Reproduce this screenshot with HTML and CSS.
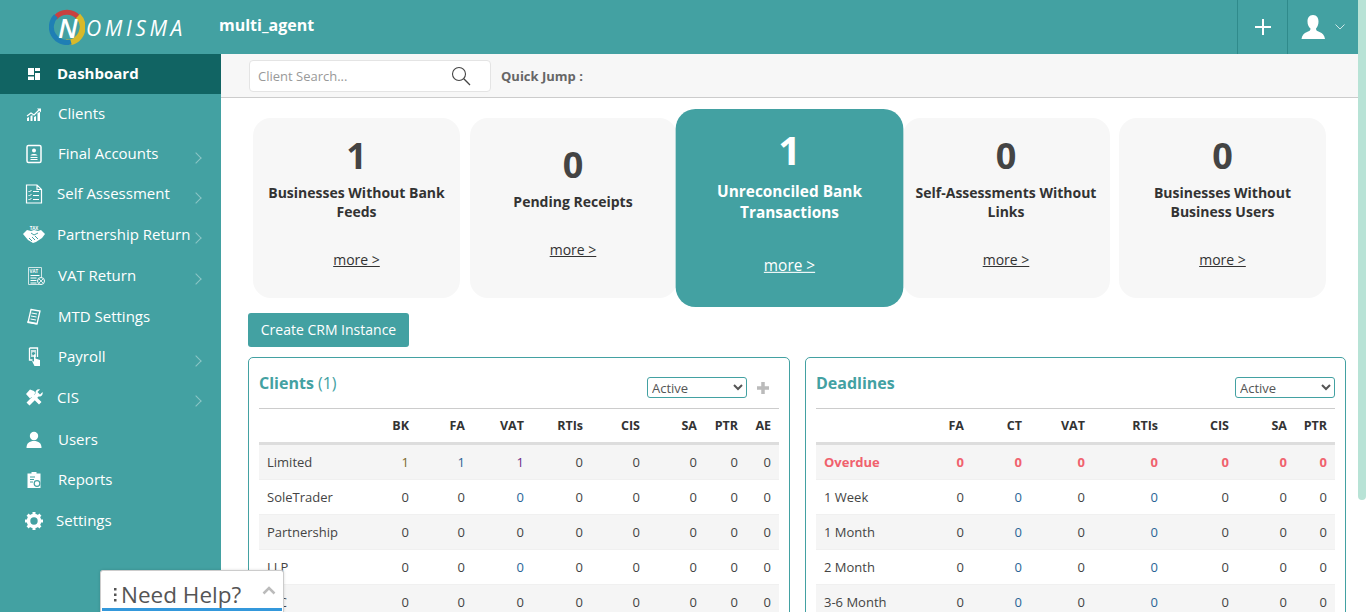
FILE: index.html
```html
<!DOCTYPE html>
<html lang="en">
<head>
  <meta charset="UTF-8" />
  <title>Nomisma - Dashboard</title>
  <link rel="stylesheet" href="styles.css">
</head>
<body>
<div class="page">
  <header class="topbar">
    <div class="logo">
      <svg class="logo-ring" width="36" height="36" viewBox="0 0 36 36">
        <path d="M6 9A15.500 15.500 0 0 1 30 9" fill="none" stroke="#c8413f" stroke-width="5"/>
        <path d="M29 7A15.500 15.500 0 0 1 17 33.500" fill="none" stroke="#d9b92a" stroke-width="6"/>
        <path d="M22 33A15.500 15.500 0 0 1 7 7" fill="none" stroke="#1f7fb4" stroke-width="5"/>
      </svg>
      <span class="logo-n">N</span>
      <span class="logo-text">OMISMA</span>
    </div>
    <div class="firm">multi_agent</div>
    <div class="top-actions">
      <div class="top-btn plus-btn">
        <svg width="18" height="18" viewBox="0 0 18 18"><path d="M9 1v16M1 9h16" stroke="#fff" stroke-width="2"/></svg>
      </div>
      <div class="top-btn user-btn">
        <svg width="24" height="24" viewBox="0 0 24 24"><path d="M12 0c4 0 5.500 3 5.500 6.500 0 3-1 5.500-2.500 7 0 2 1 2.500 3.500 3.500 3 1.200 5 3 5.500 7H.5c.5-4 2.500-5.800 5.500-7 2.500-1 3.500-1.500 3.500-3.500C7.500 12 6.500 9.500 6.500 6.500 6.500 3 8 0 12 0z" fill="#fff"/></svg>
        <svg width="10" height="6" viewBox="0 0 10 6"><path d="M.5.5 5 5 9.500.5" fill="none" stroke="#cfe6e6" stroke-width="1"/></svg>
      </div>
    </div>
  </header>

  <div class="layout">
    <nav class="sidebar">
      <a class="nav-item active">
        <svg class="nav-icon" viewBox="0 0 20 20"><path d="M4 4h6v7H4zM11 4h5v3h-5zM11 9h5v7h-5zM4 12.500h6V16H4z" fill="#fff"/></svg>
        <span>Dashboard</span>
      </a>
      <a class="nav-item">
        <svg class="nav-icon" viewBox="0 0 20 20"><path d="M3 17v-3l2-1v4zM6.500 17v-5l2-1v6zM10 17v-4l2-1v5zM13.500 17V9l2.500-1v9z" fill="#fff"/><path d="M3 12l4-3 3 2 5-5" fill="none" stroke="#fff" stroke-width="1.200"/><path d="M13 4.500h4v4z" fill="#fff"/></svg>
        <span>Clients</span>
      </a>
      <a class="nav-item">
        <svg class="nav-icon" viewBox="0 0 20 20"><rect x="3" y="1.500" width="14" height="17" rx="1.500" fill="none" stroke="#fff" stroke-width="1.500"/><circle cx="10" cy="6.500" r="2" fill="#fff"/><path d="M6.500 11.500c.5-2 6.500-2 7 0zM6.500 13h7v1h-7zM6.500 15h7v1h-7z" fill="#fff"/></svg>
        <span>Final Accounts</span>
        <i class="chev"></i>
      </a>
      <a class="nav-item near">
        <svg class="nav-icon" viewBox="0 0 20 20"><path d="M2.500 1h10.500l4.500 4.500V19H2.500zM13 1v4.500h4.500" fill="none" stroke="#fff" stroke-width="1.200"/><path d="M4.500 7l1 1 2-2M4.500 11l1 1 2-2M4.500 15l1 1 2-2" fill="none" stroke="#fff" stroke-width="1"/><path d="M9 7.500h6M9 11.500h6M9 15.500h6" stroke="#fff" stroke-width="1.200"/></svg>
        <span>Self Assessment</span>
        <i class="chev"></i>
      </a>
      <a class="nav-item near tall">
        <svg class="nav-icon wide" viewBox="0 0 24 20"><path d="M1 9l4-4 4 1 3-1 4 1 3-1 4 4-3 4-6 4-3 1-5-3z" fill="#fff"/><path d="M9 8l3 2 4-2M7 13l3 3M10 12l3 3M13 11l3 3" fill="none" stroke="#43a1a2" stroke-width="1"/><text x="12" y="4.500" class="icon-tag" text-anchor="middle">TAX</text></svg>
        <span>Partnership Return</span>
        <i class="chev"></i>
      </a>
      <a class="nav-item tall">
        <svg class="nav-icon shifted" viewBox="0 0 20 20"><path d="M2.500 1.500h13v17h-13z" fill="none" stroke="#cfe6e6" stroke-width="1"/><text x="3.500" y="6.500" class="icon-tag">VAT</text><path d="M4.500 9.500h9M4.500 12h6M4.500 14.500h6M4.500 17h6" stroke="#fff" stroke-width="1"/><circle cx="15" cy="15" r="3.500" fill="#43a1a2" stroke="#fff"/><path d="M13 13l4 4M17 13l-4 4" stroke="#fff" stroke-width=".8"/></svg>
        <span>VAT Return</span>
        <i class="chev"></i>
      </a>
      <a class="nav-item tall">
        <svg class="nav-icon" viewBox="0 0 20 20"><path d="M7 2.500l9 1.500-3 13-9-1.500z" fill="none" stroke="#fff" stroke-width="1.300"/><path d="M7.500 6l5.500 1M7 9l5.500 1M6.500 12l5.500 1" stroke="#fff" stroke-width="1"/><path d="M3.500 15.500l9 2 1-1.500-10-2z" fill="#fff"/></svg>
        <span>MTD Settings</span>
      </a>
      <a class="nav-item">
        <svg class="nav-icon" viewBox="0 0 20 20"><path d="M5.500 1h8v9" fill="none" stroke="#fff" stroke-width="1.300"/><path d="M5.500 1v12h3" fill="none" stroke="#fff" stroke-width="1.300"/><rect x="7" y="3" width="5" height="7" fill="#cfe6e6"/><circle cx="9.500" cy="6.500" r="1.600" fill="#43a1a2"/><path d="M10 7.500h1.500v4l4.500 1.500v6h-5.500L8 14l2 .5z" fill="#fff"/></svg>
        <span>Payroll</span>
        <i class="chev"></i>
      </a>
      <a class="nav-item near tall">
        <svg class="nav-icon" viewBox="0 0 20 20"><path d="M2 6l4-4.500 4 1.500 1.500 2-1.500 1.500L17.500 14l-2.500 2.500L7.500 9 6 10.500z" fill="#fff"/><path d="M18.500 4l-2.500 2.500L13.500 4 16 1.500c-2.500-.8-5 1.200-4.500 4L2.500 14.500 5.500 17.500l9-9c2.800.5 4.800-1.800 4-4.500z" fill="#fff"/></svg>
        <span>CIS</span>
        <i class="chev"></i>
      </a>
      <a class="nav-item taller">
        <svg class="nav-icon" viewBox="0 0 20 20"><circle cx="10" cy="6" r="4.200" fill="#fff"/><path d="M2.500 18c0-5 3-7 7.500-7s7.500 2 7.500 7z" fill="#fff"/></svg>
        <span>Users</span>
      </a>
      <a class="nav-item">
        <svg class="nav-icon" viewBox="0 0 20 20"><path d="M3.500 3.500h4V2h5v1.500h4V18h-13z" fill="#fff"/><path d="M6 7h5M6 9.500h4M6 12h3" stroke="#43a1a2" stroke-width="1.200"/><circle cx="13" cy="13.500" r="2.800" fill="none" stroke="#43a1a2" stroke-width="1.200"/></svg>
        <span>Reports</span>
      </a>
      <a class="nav-item settings tall">
        <svg class="nav-icon" viewBox="0 0 20 20"><circle cx="10" cy="10" r="5.500" fill="none" stroke="#fff" stroke-width="3.600"/><path d="M10 1v3M10 16v3M1 10h3M16 10h3M3.600 3.600l2.100 2.100M14.300 14.300l2.100 2.100M3.600 16.400l2.100-2.100M14.300 5.700l2.100-2.100" stroke="#fff" stroke-width="3"/></svg>
        <span>Settings</span>
      </a>
    </nav>

    <main class="content">
      <div class="subbar">
        <div class="search">
          <span class="search-hint">Client Search...</span>
          <svg width="20" height="20" viewBox="0 0 20 20"><circle cx="8" cy="8" r="6.500" fill="none" stroke="#444" stroke-width="1.100"/><path d="M12.800 12.800 19 19" stroke="#444" stroke-width="1.300"/></svg>
        </div>
        <div class="quick-jump">Quick Jump :</div>
      </div>

      <div class="cards">
        <div class="card">
          <div class="card-num">1</div>
          <div class="card-title">Businesses Without Bank Feeds</div>
          <a class="card-more">more &gt;</a>
        </div>
        <div class="card">
          <div class="card-num">0</div>
          <div class="card-title">Pending Receipts</div>
          <a class="card-more">more &gt;</a>
        </div>
        <div class="card card-active">
          <div class="card-num">1</div>
          <div class="card-title">Unreconciled Bank Transactions</div>
          <a class="card-more">more &gt;</a>
        </div>
        <div class="card">
          <div class="card-num">0</div>
          <div class="card-title">Self-Assessments Without Links</div>
          <a class="card-more">more &gt;</a>
        </div>
        <div class="card">
          <div class="card-num">0</div>
          <div class="card-title">Businesses Without Business Users</div>
          <a class="card-more">more &gt;</a>
        </div>
      </div>

      <button class="crm-btn">Create CRM Instance</button>

      <div class="panels">
        <section class="panel">
          <div class="panel-head">
            <h2>Clients <span class="count">(1)</span></h2>
            <div class="panel-tools">
              <select class="status"><option>Active</option></select>
              <svg width="14" height="14" viewBox="0 0 14 14"><path d="M7 1v12M1 7h12" stroke="#bbb" stroke-width="3.500"/></svg>
            </div>
          </div>
          <table class="grid clients">
            <colgroup><col class="c100"><col class="c58"><col class="c56"><col class="c59"><col class="c59"><col class="c57"><col class="c57"><col class="c41"><col class="c33"></colgroup>
            <thead><tr><th></th><th>BK</th><th>FA</th><th>VAT</th><th>RTIs</th><th>CIS</th><th>SA</th><th>PTR</th><th>AE</th></tr></thead>
            <tbody>
              <tr><td>Limited</td><td class="olive">1</td><td class="blue">1</td><td class="purple">1</td><td>0</td><td>0</td><td>0</td><td>0</td><td>0</td></tr>
              <tr><td>SoleTrader</td><td>0</td><td>0</td><td class="blue">0</td><td>0</td><td>0</td><td>0</td><td>0</td><td>0</td></tr>
              <tr><td>Partnership</td><td>0</td><td>0</td><td>0</td><td>0</td><td>0</td><td>0</td><td>0</td><td>0</td></tr>
              <tr><td>LLP</td><td>0</td><td>0</td><td class="blue">0</td><td>0</td><td>0</td><td>0</td><td>0</td><td>0</td></tr>
              <tr><td>CIC</td><td>0</td><td>0</td><td>0</td><td>0</td><td>0</td><td>0</td><td>0</td><td>0</td></tr>
            </tbody>
          </table>
        </section>

        <section class="panel">
          <div class="panel-head">
            <h2>Deadlines</h2>
            <div class="panel-tools">
              <select class="status"><option>Active</option></select>
            </div>
          </div>
          <table class="grid deadlines">
            <colgroup><col class="c100"><col class="c56"><col class="c58"><col class="c63"><col class="c73"><col class="c71"><col class="c58"><col class="c40"></colgroup>
            <thead><tr><th></th><th>FA</th><th>CT</th><th>VAT</th><th>RTIs</th><th>CIS</th><th>SA</th><th>PTR</th></tr></thead>
            <tbody>
              <tr class="overdue"><td>Overdue</td><td>0</td><td>0</td><td>0</td><td>0</td><td>0</td><td>0</td><td>0</td></tr>
              <tr><td>1 Week</td><td>0</td><td class="blue">0</td><td>0</td><td class="blue">0</td><td>0</td><td>0</td><td>0</td></tr>
              <tr><td>1 Month</td><td>0</td><td class="blue">0</td><td>0</td><td class="blue">0</td><td>0</td><td>0</td><td>0</td></tr>
              <tr><td>2 Month</td><td>0</td><td class="blue">0</td><td>0</td><td class="blue">0</td><td>0</td><td>0</td><td>0</td></tr>
              <tr><td>3-6 Month</td><td>0</td><td class="blue">0</td><td>0</td><td class="blue">0</td><td>0</td><td>0</td><td>0</td></tr>
            </tbody>
          </table>
        </section>
      </div>
    </main>
  </div>
</div>

<div class="scroll-thumb"></div>

<div class="help">
  <svg class="help-dots" width="4" height="14" viewBox="0 0 4 14"><path d="M1 0h2.500v2.500H1zM1 5.500h2.500V8H1zM1 11h2.500v2.500H1z" fill="#555"/></svg>
  <span class="help-text">Need Help?</span>
  <svg class="help-caret" width="14" height="9" viewBox="0 0 14 9"><path d="M1.500 7.500 7 2l5.500 5.500" fill="none" stroke="#bbb" stroke-width="2.500"/></svg>
</div>
</body>
</html>
```

FILE: styles.css
```css
html, body { margin: 0; height: 100%; overflow: hidden; }
body { font-family: "Open Sans", "Liberation Sans", sans-serif; font-size: 13px; color: #444; }
a { text-decoration: none; color: inherit; }

.page { height: 100vh; margin-right: 8px; overflow: hidden; background: #fff; }
.scroll-thumb { position: absolute; right: 0; top: 0; width: 8px; height: 500px; background: #b8e3d6; border-radius: 0 0 4px 4px; }

/* top bar */
.topbar { display: flex; align-items: center; height: 54px; background: #43a1a2; color: #fff; }
.logo { display: flex; align-items: center; width: 219px; padding-left: 49px; box-sizing: border-box; }
.logo-ring { flex: none; }
.logo-n { flex: none; margin: 2px 0 0 -27px; width: 27px; font-size: 27px; font-style: italic; font-weight: 600; line-height: 36px; }
.logo-text { margin: 2px 0 0 1px; font-size: 21px; font-style: italic; letter-spacing: 3.600px; line-height: 36px; }
.firm { font-size: 16px; font-weight: 700; margin-top: -4px; }
.top-actions { display: flex; margin-left: auto; height: 54px; }
.top-btn { display: flex; align-items: center; border-left: 1px solid #2f8a8b; height: 54px; box-sizing: border-box; }
.plus-btn { width: 50px; justify-content: center; }
.user-btn { width: 71px; padding-left: 13px; gap: 10px; }

/* layout */
.layout { display: flex; align-items: stretch; }
.sidebar { flex: none; width: 221px; background: #43a1a2; color: #fff; }
.nav-item { display: flex; align-items: center; height: 40px; box-sizing: border-box; padding: 0 0 2px 24px; font-size: 15px; gap: 14px; position: relative; }
.nav-item.tall { height: 41px; }
.nav-item.taller { height: 42px; padding-bottom: 0; }
.nav-item.near { gap: 13px; }
.nav-item.settings { gap: 12px; }
.nav-item.active { background: #116463; font-weight: 700; gap: 13px; }
.nav-icon { width: 20px; height: 20px; flex: none; margin-top: 2px; }
.nav-icon.wide { width: 24px; margin-left: -2px; margin-right: -2px; }
.nav-icon.shifted { margin-left: 2px; margin-right: -2px; }
.icon-tag { font-size: 4.500px; font-weight: 700; fill: #fff; font-family: "Open Sans", sans-serif; }
.chev { position: absolute; left: 192px; top: 20px; width: 7px; height: 7px; border-top: 1px solid #8cc6c6; border-right: 1px solid #8cc6c6; transform: rotate(45deg); }

/* content */
.content { flex: 1; min-width: 0; }
.subbar { display: flex; align-items: center; height: 44px; box-sizing: border-box; padding-left: 28px; background: #f7f7f7; border-bottom: 1px solid #ccc; }
.search { display: flex; align-items: center; justify-content: space-between; width: 242px; height: 32px; box-sizing: border-box; padding: 0 19px 0 8px; background: #fff; border: 1px solid #e4e4e4; border-radius: 4px; }
.search-hint { color: #999; font-size: 13px; }
.quick-jump { margin-left: 10px; font-size: 13px; font-weight: 700; color: #666; }

.cards { display: grid; grid-template-columns: repeat(5, 207px); column-gap: 9.500px; margin: 20px 0 15px 32px; }
.card { display: flex; flex-direction: column; align-items: center; justify-content: center; height: 180px; box-sizing: border-box; padding: 0 10px 11px; background: #f7f7f7; border-radius: 18px; text-align: center; color: #333; }
.card-num { font-size: 36px; font-weight: 700; line-height: 40px; color: #444; }
.card-title { margin-top: 7px; font-size: 14px; font-weight: 700; line-height: 19px; }
.card-more { margin-top: 29px; font-size: 14px; line-height: 20px; text-decoration: underline; }
.card-active { background: #43a1a2; color: #fff; transform: scale(1.1); }
.card-active .card-num { color: #fff; }

.crm-btn { display: block; margin-left: 27px; width: 161px; height: 34px; padding: 0 0 2px; background: #43a1a2; color: #fff; border: 0; border-radius: 3px; font: 14px "Open Sans", sans-serif; }

.panels { display: grid; grid-template-columns: 542px 541px; column-gap: 15px; margin: 10px 12px 0 27px; }
.panel { border: 1px solid #43a1a2; border-radius: 5px; padding: 0 10px 10px; }
.panel-head { display: flex; justify-content: space-between; height: 51px; box-sizing: border-box; border-bottom: 1px solid #ccc; }
.panel-head h2 { margin: 14px 0 0; font-size: 16px; font-weight: 700; line-height: 22px; color: #43a1a2; }
.count { font-weight: 400; }
.panel-tools { display: flex; align-items: center; gap: 9px; height: 21px; margin-top: 19px; }
.panel-tools svg { margin-right: 9px; }
.status { width: 100px; height: 21px; padding: 0; background: #fff; border: 1px solid #43a1a2; border-radius: 3px; font: 13px "Open Sans", sans-serif; color: #555; }

.grid { width: 100%; table-layout: fixed; border-collapse: separate; border-spacing: 0; }
.grid th { height: 36px; box-sizing: border-box; padding: 0 8px 0 0; border-bottom: 3px solid #ddd; text-align: right; font-size: 12.500px; font-weight: 700; color: #333; }
.grid td { height: 35px; padding: 0 8px 0 0; box-sizing: border-box; border-bottom: 1px solid #f0f0f0; text-align: right; color: #444; }
.grid td:first-child { padding-left: 8px; text-align: left; }
.grid tbody tr:nth-child(odd) { background: #f5f5f5; }
.grid .blue { color: #2a6496; }
.grid .olive { color: #7a6a2a; }
.grid .purple { color: #6d2a8a; }
.grid .overdue td { color: #f0616d; font-weight: 700; }

.c100 { width: 100px; }
.c56 { width: 56px; } .c57 { width: 57px; } .c58 { width: 58px; } .c59 { width: 59px; }
.c63 { width: 63px; } .c71 { width: 71px; } .c73 { width: 73px; }
.c33 { width: 33px; } .c40 { width: 40px; } .c41 { width: 41px; }

/* help widget */
.help { position: absolute; left: 100px; top: 570px; width: 184px; height: 42px; box-sizing: border-box; padding: 6px 0 0 12px; background: #fff; border: 1px solid #ccc; border-bottom: 0; border-radius: 3px 3px 0 0; display: flex; align-items: center; color: #555; font-size: 22.500px; box-shadow: 0 0 3px rgba(0,0,0,.15); }
.help::after { content: ""; position: absolute; left: 1px; right: 1px; bottom: 1px; height: 3px; background: #3498db; }
.help-dots { flex: none; margin-right: 4px; }
.help-caret { position: absolute; left: 161px; top: 15px; }
```
